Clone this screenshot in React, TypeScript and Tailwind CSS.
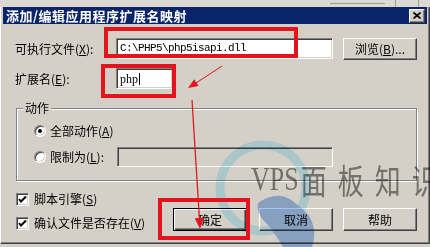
import React from 'react';

const raised =
  'border border-t-white border-l-white border-r-[#404040] border-b-[#404040] shadow-[inset_-1px_-1px_0_#808080]';
const sunken =
  'border border-t-[#808080] border-l-[#808080] border-r-white border-b-white shadow-[inset_1px_1px_0_#404040,inset_-1px_-1px_0_#d4d0c8]';

function Acc({ k }: { k: string }) {
  return (
    <span>
      (<span className="underline underline-offset-[1px]">{k}</span>)
    </span>
  );
}

function Radio({ checked }: { checked?: boolean }) {
  return (
    <span className={`w-[12px] h-[12px] rounded-full bg-white flex items-center justify-center shrink-0 ${sunken}`}>
      {checked && <span className="w-[4px] h-[4px] rounded-full bg-black" />}
    </span>
  );
}

function Check() {
  return (
    <span className={`w-[13px] h-[13px] bg-white flex items-center justify-center shrink-0 ${sunken}`}>
      <svg width="9" height="9" viewBox="0 0 9 9">
        <polyline points="1,4 3,6.5 8,1.5" fill="none" stroke="#000" strokeWidth="2" />
      </svg>
    </span>
  );
}

function Button({ label, isDefault }: { label: React.ReactNode; isDefault?: boolean }) {
  return (
    <div
      className={
        isDefault
          ? 'w-[74px] h-[23px] flex items-center justify-center border border-black shadow-[inset_1px_1px_0_#fff,inset_-1px_-1px_0_#404040,inset_-2px_-2px_0_#808080]'
          : `w-[74px] h-[23px] flex items-center justify-center ${raised}`
      }
    >
      {label}
    </div>
  );
}

export default function App() {
  return (
    <div className="w-[430px] h-[247px] overflow-hidden relative bg-[#d4d0c8] font-['Noto_Sans_CJK_SC',sans-serif] text-[12px] text-black leading-none flex flex-col">
      {/* window behind */}
      <div className="h-[7px] shrink-0 bg-[#dcd9d2] relative">
        <div className="absolute left-[330px] top-[3px] w-[55px] h-px bg-[#9a9a9a]" />
        <div className="absolute left-[395px] top-0 w-px h-[7px] bg-[#9a9a9a]" />
        <div className="absolute left-[418px] top-0 w-px h-[7px] bg-[#9a9a9a]" />
      </div>

      {/* dialog */}
      <div className="h-[237px] shrink-0 flex flex-col border-l border-l-white border-r border-r-[#404040] border-b border-b-[#404040] shadow-[inset_0_-1px_0_#808080,inset_-1px_0_0_#808080]">
        <div className="mx-[2px] h-[17px] shrink-0 bg-[#0a246a] flex items-center justify-between pl-[3px] pr-[2px]">
          <span className="text-white font-bold text-[13px] tracking-[0.5px]">添加/编辑应用程序扩展名映射</span>
          <div className={`w-[16px] h-[14px] flex items-center justify-center bg-[#d4d0c8] ${raised}`}>
            <svg width="8" height="7" viewBox="0 0 8 7">
              <path d="M0.5 0.5 L7.5 6.5 M7.5 0.5 L0.5 6.5" stroke="#000" strokeWidth="1.7" />
            </svg>
          </div>
        </div>

        {/* row 1 */}
        <div className="flex items-start h-[22px] mt-[14px]">
          <div className="w-[115px] h-[21px] pl-[14px] flex items-center">
            可执行文件<Acc k="X" />:
          </div>
          <div className={`w-[217px] h-[21px] bg-white flex items-center pl-[3px] font-['Liberation_Mono',monospace] text-[11px] tracking-[-0.6px] ${sunken}`}>
            C:\PHP5\php5isapi.dll
          </div>
          <div className="ml-[10px]">
            <div className={`w-[74px] h-[22px] flex items-center justify-center ${raised}`}>
              浏览<Acc k="B" />...
            </div>
          </div>
        </div>

        {/* row 2 */}
        <div className="flex items-center h-[21px] mt-[8px]">
          <div className="w-[115px] pl-[14px]">
            扩展名<Acc k="E" />:
          </div>
          <div className={`w-[57px] h-[21px] bg-white flex items-center pl-[3px] font-['Liberation_Serif',serif] text-[12px] ${sunken}`}>
            php<span className="w-px h-[12px] bg-black ml-[1px]" />
          </div>
        </div>

        {/* group box */}
        <div className="relative mt-[19px] ml-[15px] w-[401px] h-[73px] border border-[#808080] shadow-[1px_1px_0_#fff,inset_1px_1px_0_#fff] pl-[17px] pt-[12px] flex flex-col">
          <span className="absolute left-[6px] top-[-7px] px-[2px] bg-[#d4d0c8]">动作</span>
          <div className="flex items-center h-[20px]">
            <Radio checked />
            <span className="ml-[4px]">
              全部动作<Acc k="A" />
            </span>
          </div>
          <div className="flex items-center h-[20px] mt-[6px]">
            <Radio />
            <span className="ml-[4px] w-[67px]">
              限制为<Acc k="L" />:
            </span>
            <div className={`w-[216px] h-[20px] bg-[#d4d0c8] ${sunken}`} />
          </div>
        </div>

        {/* bottom */}
        <div className="flex items-start">
          <div className="w-[172px] pl-[15px] pt-[8px] flex flex-col gap-[4px]">
            <div className="flex items-center h-[20px]">
              <Check />
              <span className="ml-[5px]">
                脚本引擎<Acc k="S" />
              </span>
            </div>
            <div className="flex items-center h-[20px]">
              <Check />
              <span className="ml-[5px]">
                确认文件是否存在<Acc k="V" />
              </span>
            </div>
          </div>
          <div className="mt-[27px] flex">
            <Button label="确定" isDefault />
            <div className="ml-[12px]">
              <Button label="取消" />
            </div>
            <div className="ml-[10px]">
              <Button label="帮助" />
            </div>
          </div>
        </div>
      </div>

      {/* watermark */}
      <svg className="absolute left-0 top-0 pointer-events-none mix-blend-multiply" width="430" height="247" viewBox="0 0 430 247">
        <circle cx="263" cy="188" r="43" fill="none" stroke="#cdf3ff" strokeWidth="9" />
        <path
          d="M258 203 C265 198 274 195 281 196 C287 197 292 200 295 203 C302 208 309 214 312 222 C315 230 315 238 312 247 L283 247 C278 238 272 230 267 224 C262 219 256 212 258 203 Z"
          fill="#a2c4f5"
        />
      </svg>
      <div className="absolute left-[251px] top-[163px] whitespace-nowrap text-[#8a8a8a] mix-blend-multiply scale-y-[1.3] origin-top pointer-events-none flex items-start">
        <span className="font-['Liberation_Serif',serif] text-[26px]">VPS</span>
        <span className="text-[26px] tracking-[11px] ml-[2px]">面板知识</span>
      </div>

      {/* red annotations */}
      <div className="absolute left-[104px] top-[27px] w-[194px] h-[31px] border-4 border-[#e3141b] pointer-events-none" />
      <div className="absolute left-[101px] top-[64px] w-[75px] h-[34px] border-4 border-[#e3141b] pointer-events-none" />
      <div className="absolute left-[158px] top-[198px] w-[92px] h-[42px] border-4 border-[#e3141b] pointer-events-none" />
      <svg className="absolute left-0 top-0 pointer-events-none" width="430" height="247" viewBox="0 0 430 247">
        <line x1="222" y1="66" x2="193" y2="85" stroke="#e3141b" strokeWidth="1" />
        <polygon points="188,88 198.6,86 194.2,79.2" fill="#e3141b" />
        <line x1="192" y1="100" x2="199.5" y2="220" stroke="#e3141b" strokeWidth="1.2" />
        <polygon points="200,229 203.8,217.7 194.8,218.3" fill="#e3141b" />
      </svg>
    </div>
  );
}
